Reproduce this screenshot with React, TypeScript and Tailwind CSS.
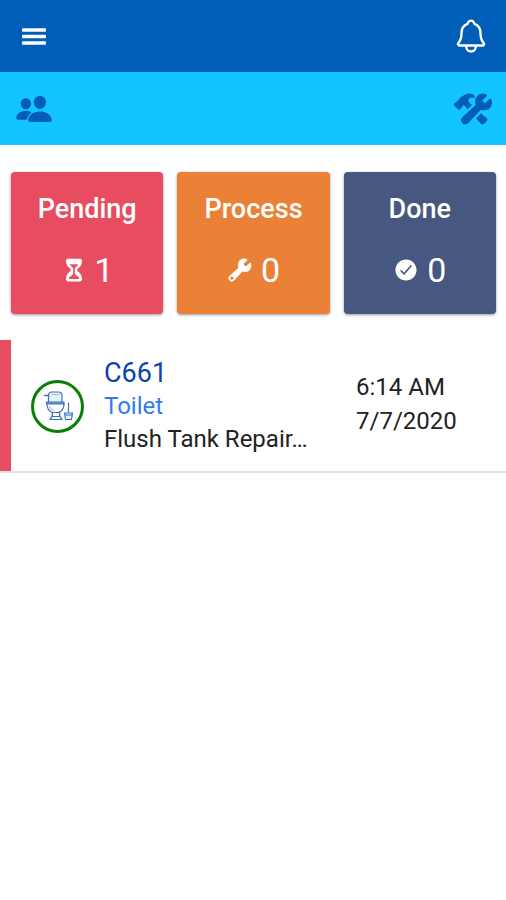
import type { IconType } from "react-icons";
import {
    IoBuild,
    IoCheckmarkCircle,
    IoConstruct,
    IoHourglass,
    IoNotificationsOutline,
    IoPeople,
} from "react-icons/io5";

interface StatusCardProps {
    label: string;
    count: number;
    icon: IconType;
    color: string;
}

const statuses: StatusCardProps[] = [
    { label: "Pending", count: 1, icon: IoHourglass, color: "bg-[#e84c61]" },
    { label: "Process", count: 0, icon: IoBuild, color: "bg-[#ea8137]" },
    { label: "Done", count: 0, icon: IoCheckmarkCircle, color: "bg-[#465780]" },
];

function MenuIcon() {
    return (
        <svg viewBox="0 0 24 17" className="h-[17px] w-6" fill="currentColor" aria-hidden="true">
            <rect x="0" y="0.2" width="24" height="3.6" rx="1" />
            <rect x="0" y="6.7" width="24" height="3.6" rx="1" />
            <rect x="0" y="13.2" width="24" height="3.6" rx="1" />
        </svg>
    );
}

function ToiletIcon() {
    return (
        <svg
            viewBox="0 0 30 30"
            className="size-[30px]"
            fill="none"
            stroke="#3a74b8"
            strokeWidth="1.2"
            strokeLinejoin="round"
            strokeLinecap="round"
            aria-hidden="true"
        >
            {/* tank and flush lever */}
            <path d="M5.5 11V4.5Q5.5 1 9 1h6.5Q19 1 19 4.5V11" fill="#e6f0fa" />
            <path d="M9 3.5h7" stroke="#9dbde0" />
            <path d="M1.5 4.5h4" strokeWidth="1.6" />
            {/* seat */}
            <path d="M3.5 11H21v2H3.5z" fill="#6f9fd2" />
            {/* bowl and foot */}
            <path d="M4 13q0 7 6 8.500h5q6-1.500 6-8.500" />
            <path d="M6.5 16q2 3 4.5 3.5" stroke="#9dbde0" />
            <path d="M9.5 21.5q.5 4-2.5 7h12q-3-3-2.500-7zM10 25.500h6" />
            {/* brush */}
            <path d="M25.5 12v9" />
            <path d="M21.5 22h8l-1 6.5h-6zM22 24h7" fill="#e6f0fa" />
        </svg>
    );
}

function StatusCard({ label, count, icon: Icon, color }: StatusCardProps) {
    return (
        <button
            type="button"
            className={`${color} flex h-[142px] flex-1 flex-col items-center rounded-sm pt-5 text-white shadow-[0_1px_3px_rgba(0,0,0,0.4)]`}
        >
            <span className="text-[27px] leading-[34px] font-medium">{label}</span>
            <span className="mt-6 flex items-center gap-2 text-[34px] leading-10">
                <Icon className="size-[26px]" />
                {count}
            </span>
        </button>
    );
}

export default function App() {
    return (
        <div className="min-h-screen bg-white font-[Roboto,sans-serif] text-[#222]">
            <header className="flex h-[72px] items-center justify-between bg-[#005eb9] pr-4 pl-[22px] text-white">
                <button type="button" aria-label="Menu">
                    <MenuIcon />
                </button>
                <button type="button" aria-label="Notifications">
                    <IoNotificationsOutline className="size-[38px]" />
                </button>
            </header>

            <nav className="flex h-[73px] items-center justify-between bg-[#12c5ff] pr-[14px] pl-[15px] text-[#005eb9]">
                <button type="button" aria-label="People">
                    <IoPeople className="size-[38px]" />
                </button>
                <button type="button" aria-label="Services">
                    <IoConstruct className="size-[38px]" />
                </button>
            </nav>

            <main>
                <section className="flex gap-[14px] pt-[27px] pr-[10px] pb-[26px] pl-[11px]">
                    {statuses.map((status) => (
                        <StatusCard key={status.label} {...status} />
                    ))}
                </section>

                <article className="flex items-stretch border-b-2 border-[#e2e2e2]">
                    <div className="w-[11px] shrink-0 bg-[#e84c61]" />
                    <div className="flex min-w-0 flex-1 items-center pt-4 pb-[15px] pl-5">
                        <div className="flex size-[53px] shrink-0 items-center justify-center rounded-full border-[3px] border-[#088008]">
                            <ToiletIcon />
                        </div>
                        <div className="ml-5 min-w-0 flex-1">
                            <h2 className="text-[27px] leading-[34px] text-[#0b44ad]">C661</h2>
                            <p className="text-2xl leading-[33px] text-[#317df0]">Toilet</p>
                            <p className="text-2xl leading-[33px]">Flush Tank Repair…</p>
                        </div>
                        <div className="w-[150px] shrink-0 pb-1 text-2xl leading-[34px]">
                            <p>6:14 AM</p>
                            <p>7/7/2020</p>
                        </div>
                    </div>
                </article>
            </main>
        </div>
    );
}
